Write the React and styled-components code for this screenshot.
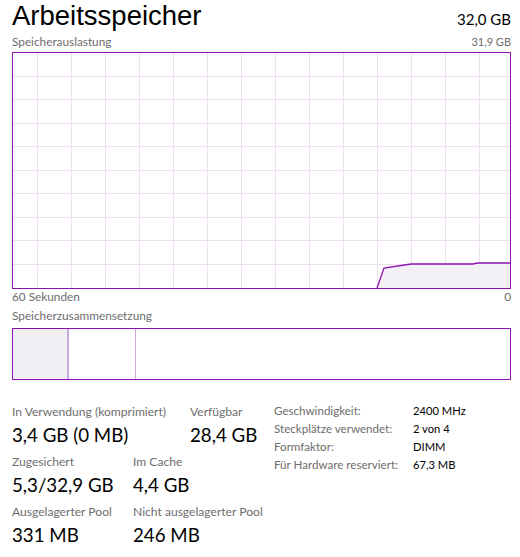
import React from 'react';
import styled, { createGlobalStyle } from 'styled-components';

const GlobalStyle = createGlobalStyle`
  html, body {
    margin: 0;
    padding: 0;
    background: #ffffff;
  }
  body {
    font-family: "Lato", "Liberation Sans", sans-serif;
    color: #000000;
  }
`;

const PURPLE = '#8b12ae';
const GRID = '#eedff2';
const FILL = '#f1eff4';

const Panel = styled.div`
  width: 520px;
  height: 557px;
  box-sizing: border-box;
  padding: 0 9px 0 12px;
  overflow: hidden;
`;

const Header = styled.div`
  display: flex;
  justify-content: space-between;
  align-items: baseline;
  height: 30px;
`;

const Title = styled.div`
  font-family: "Liberation Sans", "Lato", sans-serif;
  font-size: 27.5px;
  line-height: 31px;
`;

const Total = styled.div`
  font-size: 15px;
  line-height: 30px;
`;

const Caption = styled.div`
  display: flex;
  justify-content: space-between;
  align-items: baseline;
  font-size: 11.8px;
  line-height: 16px;
  color: #6d6d6d;
  margin-top: ${p => p.$top || 0}px;
`;

const CaptionValue = styled.span`
  font-size: ${p => p.$size || 11.8}px;
`;

const GraphBox = styled.div`
  margin-top: 2px;
  height: 237px;
  box-sizing: border-box;
  border: 1px solid ${PURPLE};
  background: #ffffff;
  svg {
    display: block;
  }
`;

const Composition = styled.div`
  margin-top: 4px;
  height: 52px;
  box-sizing: border-box;
  border: 1px solid ${PURPLE};
  display: flex;
`;

const Segment = styled.div`
  width: ${p => p.$width}px;
  flex: ${p => (p.$grow ? 1 : 'none')};
  background: ${p => p.$fill || '#ffffff'};
  border-right: ${p => (p.$divider ? `${p.$divider}px solid #cba9db` : 'none')};
`;

const Stats = styled.div`
  margin-top: 22px;
  display: flex;
  align-items: flex-start;
`;

const LeftStats = styled.div`
  width: 262px;
  padding-top: 2px;
  display: flex;
  flex-direction: column;
  gap: 7px;
`;

const StatRow = styled.div`
  display: grid;
  grid-template-columns: ${p => p.$first}px auto;
`;

const Stat = styled.div`
  display: flex;
  flex-direction: column;
`;

const StatLabel = styled.div`
  font-size: 12.1px;
  line-height: 16px;
  color: #6d6d6d;
  white-space: nowrap;
`;

const StatValue = styled.div`
  margin-top: 3px;
  font-size: 18.7px;
  line-height: 24px;
  white-space: nowrap;
`;

const InfoTable = styled.div`
  display: grid;
  grid-template-columns: 139px auto;
  align-content: start;
  font-size: 11.6px;
  line-height: 18px;
`;

const InfoKey = styled.div`
  color: #6d6d6d;
  white-space: nowrap;
`;

const InfoVal = styled.div`
  color: #000000;
  font-size: 11.2px;
  white-space: nowrap;
`;

const W = 497;
const H = 235;

function UsageGraph() {
  const vLines = [];
  for (let x = 24; x < W; x += 34) vLines.push(x);
  const hLines = [];
  for (let i = 1; i < 10; i++) hLines.push(Math.round(i * 23.5) - 1);
  const pts = [
    [364, 235],
    [371, 215],
    [398, 211],
    [460, 211],
    [464, 210],
    [497, 210],
  ];
  const line = pts.map(p => p.join(',')).join(' ');
  const area = `${line} 497,235 364,235`;
  return (
    <svg width={W} height={H} viewBox={`0 0 ${W} ${H}`}>
      {vLines.map(x => (
        <line key={'v' + x} x1={x + 0.5} y1={0} x2={x + 0.5} y2={H} stroke={GRID} strokeWidth="1" />
      ))}
      {hLines.map(y => (
        <line key={'h' + y} x1={0} y1={y + 0.5} x2={W} y2={y + 0.5} stroke={GRID} strokeWidth="1" />
      ))}
      <polygon points={area} fill={FILL} fillOpacity="0.85" />
      <polyline points={line} fill="none" stroke={PURPLE} strokeWidth="1.3" />
    </svg>
  );
}

const info = [
  ['Geschwindigkeit:', '2400 MHz'],
  ['Steckplätze verwendet:', '2 von 4'],
  ['Formfaktor:', 'DIMM'],
  ['Für Hardware reserviert:', '67,3 MB'],
];

export default function App() {
  return (
    <Panel>
      <GlobalStyle />
      <Header>
        <Title>Arbeitsspeicher</Title>
        <Total>32,0 GB</Total>
      </Header>
      <Caption $top={4}>
        <span>Speicherauslastung</span>
        <CaptionValue $size={11}>31,9 GB</CaptionValue>
      </Caption>
      <GraphBox>
        <UsageGraph />
      </GraphBox>
      <Caption>
        <span>60 Sekunden</span>
        <CaptionValue>0</CaptionValue>
      </Caption>
      <Caption $top={3}>
        <span>Speicherzusammensetzung</span>
      </Caption>
      <Composition>
        <Segment $width={54} $fill={FILL} $divider={2} />
        <Segment $width={66} $divider={1} />
        <Segment $grow />
      </Composition>
      <Stats>
        <LeftStats>
          <StatRow $first={178}>
            <Stat>
              <StatLabel>In Verwendung (komprimiert)</StatLabel>
              <StatValue>3,4 GB (0 MB)</StatValue>
            </Stat>
            <Stat>
              <StatLabel>Verfügbar</StatLabel>
              <StatValue>28,4 GB</StatValue>
            </Stat>
          </StatRow>
          <StatRow $first={121}>
            <Stat>
              <StatLabel>Zugesichert</StatLabel>
              <StatValue>5,3/32,9 GB</StatValue>
            </Stat>
            <Stat>
              <StatLabel>Im Cache</StatLabel>
              <StatValue>4,4 GB</StatValue>
            </Stat>
          </StatRow>
          <StatRow $first={121}>
            <Stat>
              <StatLabel>Ausgelagerter Pool</StatLabel>
              <StatValue>331 MB</StatValue>
            </Stat>
            <Stat>
              <StatLabel>Nicht ausgelagerter Pool</StatLabel>
              <StatValue>246 MB</StatValue>
            </Stat>
          </StatRow>
        </LeftStats>
        <InfoTable>
          {info.map(([k, v]) => (
            <React.Fragment key={k}>
              <InfoKey>{k}</InfoKey>
              <InfoVal>{v}</InfoVal>
            </React.Fragment>
          ))}
        </InfoTable>
      </Stats>
    </Panel>
  );
}
